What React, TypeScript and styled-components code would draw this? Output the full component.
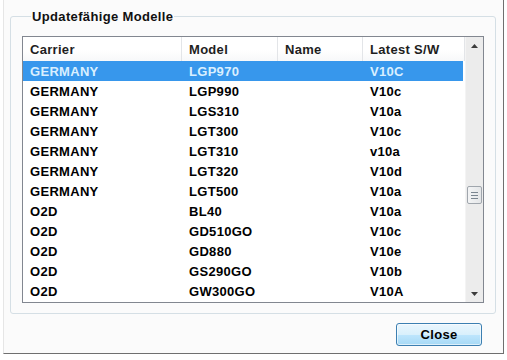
import styled, { createGlobalStyle } from "styled-components"

interface Device {
  carrier: string
  model: string
  name: string
  sw: string
}

const devices: Device[] = [
  { carrier: "GERMANY", model: "LGP970", name: "", sw: "V10C" },
  { carrier: "GERMANY", model: "LGP990", name: "", sw: "V10c" },
  { carrier: "GERMANY", model: "LGS310", name: "", sw: "V10a" },
  { carrier: "GERMANY", model: "LGT300", name: "", sw: "V10c" },
  { carrier: "GERMANY", model: "LGT310", name: "", sw: "v10a" },
  { carrier: "GERMANY", model: "LGT320", name: "", sw: "V10d" },
  { carrier: "GERMANY", model: "LGT500", name: "", sw: "V10a" },
  { carrier: "O2D", model: "BL40", name: "", sw: "V10a" },
  { carrier: "O2D", model: "GD510GO", name: "", sw: "V10c" },
  { carrier: "O2D", model: "GD880", name: "", sw: "V10e" },
  { carrier: "O2D", model: "GS290GO", name: "", sw: "V10b" },
  { carrier: "O2D", model: "GW300GO", name: "", sw: "V10A" },
]

const columns = ["Carrier", "Model", "Name", "Latest S/W"]

export default function App() {
  const selected = 0

  return (
    <>
      <Global />
      <Dialog>
        <Group>
          <Legend>Updatefähige Modelle</Legend>
          <List>
            <Body>
              <Header>
                {columns.map((c) => (
                  <HeadCell key={c}>{c}</HeadCell>
                ))}
              </Header>
              {devices.map((d, i) => (
                <Row key={d.model} $selected={i === selected}>
                  <Cell>{d.carrier}</Cell>
                  <Cell>{d.model}</Cell>
                  <Cell>{d.name}</Cell>
                  <Cell>{d.sw}</Cell>
                </Row>
              ))}
            </Body>
            <ScrollBar>
              <Arrow>
                <svg width="7" height="4" viewBox="0 0 7 4">
                  <path d="M0 4 L3.5 0 L7 4 Z" fill="#3c3c3c" />
                </svg>
              </Arrow>
              <Track>
                <Thumb>
                  <svg width="7" height="7" viewBox="0 0 7 7">
                    <path d="M0 0.5H7M0 3.5H7M0 6.5H7" stroke="#7a8590" strokeWidth="1" />
                  </svg>
                </Thumb>
              </Track>
              <Arrow>
                <svg width="7" height="4" viewBox="0 0 7 4">
                  <path d="M0 0 L3.5 4 L7 0 Z" fill="#3c3c3c" />
                </svg>
              </Arrow>
            </ScrollBar>
          </List>
        </Group>
        <Footer>
          <Button type="button">Close</Button>
        </Footer>
      </Dialog>
    </>
  )
}

//style

const Global = createGlobalStyle`
  body {
    margin: 0;
    background: #ffffff;
    font-family: "Liberation Sans", Arial, sans-serif;
  }
`

const Dialog = styled.div`
  box-sizing: border-box;
  width: 501px;
  height: 354px;
  margin-left: 3px;
  display: flex;
  flex-direction: column;
  background: #fbfbfb;
  border-left: 1px solid #e6e6e6;
  border-right: 1px solid #6f6f6f;
  border-bottom: 1px solid #6f6f6f;
`
const Group = styled.fieldset`
  box-sizing: border-box;
  width: 486px;
  margin: 9px 0 0 6px;
  padding: 12px 11px 10px 11px;
  border: 1px solid #d5dfe5;
  border-radius: 3px;
  min-width: 0;
`
const Legend = styled.legend`
  margin-left: 9px;
  padding: 0 1px;
  font-size: 13px;
  line-height: 15px;
  font-weight: bold;
  letter-spacing: 0.35px;
  color: #111;
`
const List = styled.div`
  display: flex;
  height: 267px;
  border: 1px solid #828790;
  background: #ffffff;
  box-sizing: border-box;
`
const Body = styled.div`
  flex: 1;
  overflow: hidden;
`
const Header = styled.div`
  display: grid;
  grid-template-columns: 159px 96px 85px 1fr;
  height: 24px;
  background: linear-gradient(#ffffff, #ffffff 55%, #f7f8f9);
`
const HeadCell = styled.div`
  display: flex;
  align-items: center;
  padding-left: 7px;
  font-size: 13px;
  font-weight: bold;
  letter-spacing: 0.3px;
  color: #1e1e1e;
  border-right: 1px solid #e3e5e8;
`
const Row = styled.div<{ $selected: boolean }>`
  display: grid;
  grid-template-columns: 159px 96px 85px 1fr;
  height: 20px;
  margin-right: 2px;
  background: ${(p) => (p.$selected ? "#3797ec" : "transparent")};
  color: ${(p) => (p.$selected ? "#d9efff" : "#000000")};
`
const Cell = styled.div`
  display: flex;
  align-items: center;
  padding-left: 7px;
  font-size: 13px;
  font-weight: bold;
  letter-spacing: 0.3px;
  white-space: nowrap;
`
const ScrollBar = styled.div`
  width: 17px;
  display: flex;
  flex-direction: column;
  background: #ececec;
  border-left: 1px solid #f4f4f4;
`
const Arrow = styled.div`
  height: 17px;
  display: flex;
  align-items: center;
  justify-content: center;
`
const Track = styled.div`
  flex: 1;
  padding-top: 132px;
  display: flex;
  justify-content: center;
`
const Thumb = styled.div`
  box-sizing: border-box;
  width: 15px;
  height: 18px;
  display: flex;
  align-items: center;
  justify-content: center;
  border: 1px solid #a0a6ad;
  border-radius: 2px;
  background: linear-gradient(90deg, #f3f4f5, #e4e6e8);
`
const Footer = styled.div`
  display: flex;
  justify-content: flex-end;
  padding: 9px 21px 0 0;
`
const Button = styled.button`
  width: 86px;
  height: 23px;
  padding: 0;
  border: 1px solid #3c7fb1;
  border-radius: 3px;
  background: linear-gradient(#eaf6fd, #d9f0fc 50%, #bee6fd 51%, #a7d9f5);
  font-family: "Liberation Sans", Arial, sans-serif;
  font-size: 13px;
  font-weight: bold;
  letter-spacing: 0.3px;
  color: #000;
  box-shadow: inset 0 0 0 1px rgba(255, 255, 255, 0.6);
`
